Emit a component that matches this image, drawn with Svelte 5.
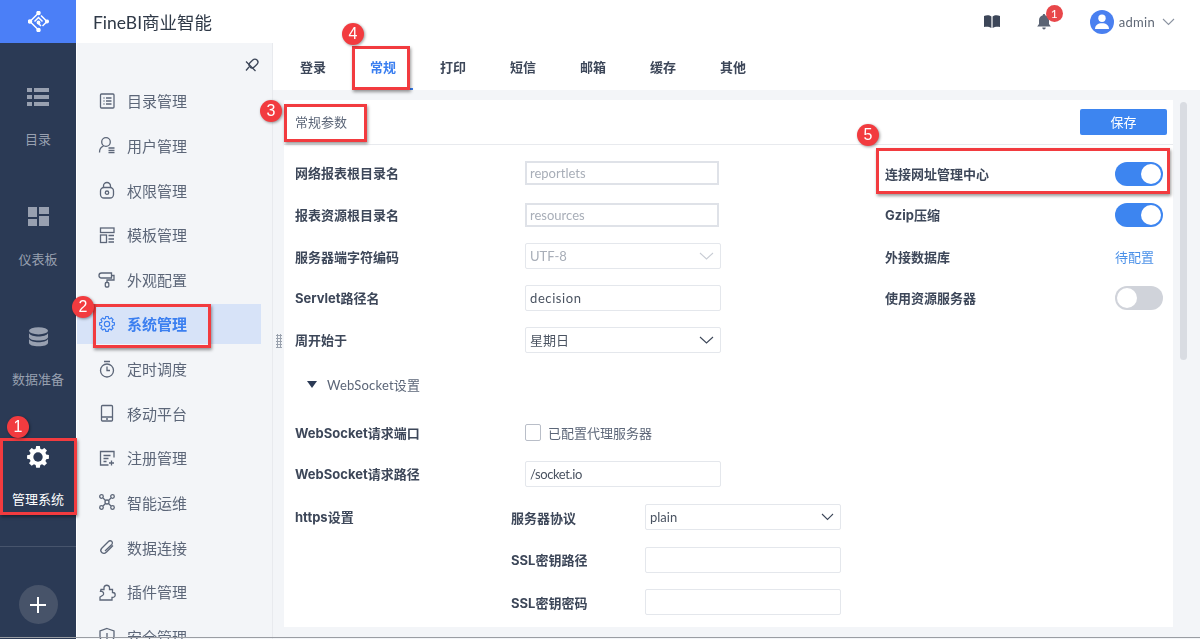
<script>
  const navItems = [
    { label: '目录管理', icon: 'list' },
    { label: '用户管理', icon: 'user' },
    { label: '权限管理', icon: 'lock' },
    { label: '模板管理', icon: 'tpl' },
    { label: '外观配置', icon: 'paint' },
    { label: '系统管理', icon: 'gear', active: true },
    { label: '定时调度', icon: 'timer' },
    { label: '移动平台', icon: 'mobile' },
    { label: '注册管理', icon: 'reg' },
    { label: '智能运维', icon: 'ops' },
    { label: '数据连接', icon: 'clip' },
    { label: '插件管理', icon: 'puzzle' },
    { label: '安全管理', icon: 'shield' }
  ];
  const tabs = ['登录', '常规', '打印', '短信', '邮箱', '缓存', '其他'];
  const gearPath = 'M8.6 1.5h2.8l.4 2.1 1.3.6 1.8-1.2 2 2-1.2 1.8.6 1.3 2.1.4v2.8l-2.1.4-.6 1.3 1.2 1.8-2 2-1.8-1.2-1.3.6-.4 2.1H8.6l-.4-2.1-1.3-.6-1.8 1.2-2-2 1.2-1.8-.6-1.3-2.1-.4V8.6l2.1-.4.6-1.3-1.2-1.8 2-2 1.8 1.2 1.3-.6z';
</script>

<div class="app">
  <aside class="rail">
    <div class="logo">
      <svg width="21" height="21" viewBox="0 0 21 21" fill="none" stroke="#fff" stroke-width="1.500">
        <path d="M10.500 2 2 10.500l8.500 8.500M13 4.500l6 6-4.500 4.500M6.500 10.500l4-4 4 4M10.500 12.500l2.500 2.500" />
        <circle cx="10.500" cy="2" r="1.500" fill="#fff" /><circle cx="2" cy="10.500" r="1.500" fill="#fff" /><circle cx="10.500" cy="19" r="1.500" fill="#fff" /><circle cx="19" cy="10.500" r="1.300" fill="#fff" /><circle cx="10.500" cy="11.500" r="1.200" fill="#fff" />
      </svg>
    </div>
    <div class="rail-item first">
      <svg width="22" height="18" viewBox="0 0 22 18" fill="#98a0b0"><rect width="5" height="4" y="0"/><rect x="7" width="15" height="4"/><rect y="7" width="5" height="4"/><rect x="7" y="7" width="15" height="4"/><rect y="14" width="5" height="4"/><rect x="7" y="14" width="15" height="4"/></svg>
      <span>目录</span>
    </div>
    <div class="rail-item">
      <svg width="21" height="20" viewBox="0 0 21 20" fill="#98a0b0"><rect width="9" height="10"/><rect x="11" width="10" height="7"/><rect y="12" width="9" height="7"/><rect x="11" y="9" width="10" height="10"/></svg>
      <span>仪表板</span>
    </div>
    <div class="rail-item">
      <svg width="21" height="21" viewBox="0 0 21 21" fill="#98a0b0"><ellipse cx="10.500" cy="4" rx="10" ry="3.800"/><path d="M.5 6.500c1.500 2.600 5.500 3.400 10 3.400s8.500-.8 10-3.400v4c0 2.300-4.500 3.800-10 3.800s-10-1.500-10-3.800z"/><path d="M.5 12.500c1.500 2.600 5.500 3.400 10 3.400s8.500-.8 10-3.400v4c0 2.300-4.500 3.800-10 3.800s-10-1.500-10-3.800z"/></svg>
      <span>数据准备</span>
    </div>
    <div class="rail-item current">
      <svg class="gear" viewBox="0 0 20 20"><path d={gearPath} fill="#fff"/><circle cx="10" cy="10" r="3.600" fill="#2b3a55"/></svg>
      <span>管理系统</span>
    </div>
    <div class="rail-foot">
      <div class="add">
        <svg width="16" height="16" viewBox="0 0 16 16" fill="#fff"><rect x="7" width="2" height="16"/><rect y="7" width="16" height="2"/></svg>
      </div>
    </div>
  </aside>

  <div class="main">
    <header class="top">
      <div class="brand">FineBI商业智能</div>
      <div class="top-right">
        <svg class="book" width="16" height="13" viewBox="0 0 16 13" fill="#3c4658"><path d="M0 1c2.500-1 5.500-1 7.400.5V13C5.500 11.700 2.500 11.500 0 12zM16 1c-2.500-1-5.500-1-7.400.5V13c1.900-1.300 4.900-1.500 7.400-1z"/></svg>
        <div class="bell">
          <svg width="14" height="16" viewBox="0 0 14 16" fill="#5b6474"><path d="M7 0c.8 0 1.200.5 1.200 1.200C10.500 1.800 12 3.800 12 6.300V10l1.800 2.400H.2L2 10V6.300c0-2.500 1.500-4.500 3.800-5.100C5.800.5 6.200 0 7 0zM5.300 13.500h3.400C8.700 14.800 8 15.500 7 15.500s-1.700-.7-1.700-2z"/></svg>
          <span class="bell-count">1</span>
        </div>
        <div class="avatar">
          <svg width="14" height="15" viewBox="0 0 14 15" fill="#fff"><circle cx="7" cy="4.200" r="3.700"/><path d="M0 15c0-4 3-5.800 7-5.800s7 1.800 7 5.800z"/></svg>
        </div>
        <span class="uname">admin</span>
        <svg class="user-caret" width="13" height="8" viewBox="0 0 13 8" fill="none" stroke="#8b93a1" stroke-width="1.100"><path d="m1 1 5.500 5.500L12 1"/></svg>
      </div>
    </header>

    <div class="body">
      <nav class="side">
        <div class="pin">
          <svg width="16" height="16" viewBox="0 0 16 16" fill="none" stroke="#3d4759" stroke-width="1.300">
            <rect x="5.500" y="2.500" width="6" height="10" rx="3" transform="rotate(45 8.500 7.500)"/>
            <path d="M1 5.500 10.500 15M4 11 1 14.500"/>
          </svg>
        </div>
        {#each navItems as item}
          <div class="nav-item" class:active={item.active}>
            <svg width="18" height="18" viewBox="0 0 18 18" fill="none" stroke={item.active ? '#3b7ff0' : '#5c6678'} stroke-width="1.300">
              {#if item.icon === 'list'}
                <rect x="2.500" y="2" width="13.500" height="14" rx="1"/><path d="M5.500 6h1M8 6h5.500M5.500 9h1M8 9h5.500M5.500 12h1M8 12h5.500"/>
              {:else if item.icon === 'user'}
                <circle cx="8" cy="6" r="4.300"/><path d="M1.500 16.500c0-3.500 1.500-5.500 4-6.300M10.500 12h6M10.500 14.300h6M10.500 16.500h6"/>
              {:else if item.icon === 'lock'}
                <rect x="2.500" y="6.500" width="13" height="10.500" rx="3.500"/><path d="M5.500 6.500V5a3.500 3.500 0 0 1 7 0v1.500"/><circle cx="9" cy="11.700" r="1.700"/>
              {:else if item.icon === 'tpl'}
                <rect x="2.500" y="2" width="13.500" height="4.500"/><rect x="2.500" y="9" width="6" height="7.500"/><path d="M10.500 9.500h5.500M10.500 13h5.500M10.500 16h5.500"/>
              {:else if item.icon === 'paint'}
                <path d="M3.500 3h10v5h-10a2.500 2.500 0 0 1 0-5zM13.500 5.500H16v4.500H9v2.500"/><rect x="7.300" y="12.500" width="3.500" height="4.500" rx="1"/>
              {:else if item.icon === 'gear'}
                <g transform="translate(.2 .2) scale(.88)"><path d={gearPath}/><circle cx="10" cy="10" r="3"/></g>
              {:else if item.icon === 'timer'}
                <circle cx="9" cy="10.500" r="6.500"/><path d="M6 1.500h6M9 6.500v4h3"/>
              {:else if item.icon === 'mobile'}
                <rect x="3.500" y="1.500" width="11" height="15.500" rx="1"/><path d="M3.500 13h11M8 15h2"/>
              {:else if item.icon === 'reg'}
                <path d="M16 8.500V2.500H2.500V16H10.500M5.500 6.500h7M5.500 9.500h5M5.500 12.500h3M13.500 11.500v5M11 14h5"/>
              {:else if item.icon === 'ops'}
                <circle cx="3.500" cy="3.500" r="1.800"/><circle cx="14.500" cy="3.500" r="1.800"/><circle cx="3.500" cy="14.500" r="1.800"/><circle cx="14.500" cy="14.500" r="1.800"/><circle cx="9" cy="9" r="2"/><path d="m5 5 2.500 2.500M13 5l-2.500 2.500M5 13l2.500-2.500M13 13l-2.500-2.500"/>
              {:else if item.icon === 'clip'}
                <path d="M15 7.500 8.300 14.200a3 3 0 0 1-4.800-3.700l7-7a2.200 2.200 0 0 1 3.300 3L7 13"/>
              {:else if item.icon === 'puzzle'}
                <path d="M6 4.500a2.800 2.800 0 0 1 5.500 0V6.500H14.500v3h.3a2.400 2.400 0 0 1 0 4.800H14V17H2v-3l2.800-1.700a2.300 2.300 0 0 0-1-4H2.500l.5-1.800H6z"/>
              {:else}
                <path d="M9 1.500 16 4v5c0 4-3 6.500-7 8-4-1.500-7-4-7-8V4zM9 6v6"/>
              {/if}
            </svg>
            <span>{item.label}</span>
          </div>
        {/each}
      </nav>

      <section class="content">
        <div class="grip"></div>
        <div class="tabs">
          {#each tabs as t}
            <div class="tab" class:on={t === '常规'}>{t}</div>
          {/each}
        </div>
        <div class="page">
          <div class="panel">
            <div class="panel-head">
              <span>常规参数</span>
              <button class="save">保存</button>
            </div>
            <div class="columns">
              <div class="col-left">
                <div class="row"><label for="a">网络报表根目录名</label><input id="a" class="ro" value="reportlets" readonly /></div>
                <div class="row"><label for="b">报表资源根目录名</label><input id="b" class="ro" value="resources" readonly /></div>
                <div class="row"><span class="lab">服务器端字符编码</span>
                  <div class="field dis">UTF-8
                    <svg width="15" height="8" viewBox="0 0 15 8" fill="none" stroke="#c8ccd4" stroke-width="1.100"><path d="m1 1 6.500 6L14 1"/></svg>
                  </div>
                </div>
                <div class="row"><span class="lab">Servlet路径名</span><div class="field wide">decision</div></div>
                <div class="row"><span class="lab">周开始于</span>
                  <div class="field">星期日
                    <svg width="15" height="8" viewBox="0 0 15 8" fill="none" stroke="#3d4759" stroke-width="1.100"><path d="m1 1 6.500 6L14 1"/></svg>
                  </div>
                </div>
                <div class="section">
                  <svg width="10" height="7" viewBox="0 0 10 7" fill="#2b3a55"><path d="M0 0h10L5 7z"/></svg>
                  <span>WebSocket设置</span>
                </div>
                <div class="row"><span class="lab">WebSocket请求端口</span>
                  <div class="check"><i></i><span>已配置代理服务器</span></div>
                </div>
                <div class="row"><span class="lab">WebSocket请求路径</span><div class="field tight">/socket.io</div></div>
                <div class="row https">
                  <span class="lab">https设置</span>
                  <div class="sub">
                    <div class="subrow"><span class="lab s">服务器协议</span>
                      <div class="field">plain
                        <svg width="13" height="8" viewBox="0 0 13 8" fill="none" stroke="#3d4759" stroke-width="1.100"><path d="m1 1 5.500 5.500L12 1"/></svg>
                      </div>
                    </div>
                    <div class="subrow"><span class="lab s">SSL密钥路径</span><div class="field"></div></div>
                    <div class="subrow"><span class="lab s">SSL密钥密码</span><div class="field"></div></div>
                  </div>
                </div>
              </div>
              <div class="col-right">
                <div class="rrow"><span class="lab">连接网址管理中心</span><div class="switch on"><b></b></div></div>
                <div class="rrow"><span class="lab">Gzip压缩</span><div class="switch on"><b></b></div></div>
                <div class="rrow"><span class="lab">外接数据库</span><a href="#top" class="link">待配置</a></div>
                <div class="rrow"><span class="lab">使用资源服务器</span><div class="switch"><b></b></div></div>
              </div>
            </div>
          </div>
          <div class="scroll"><div class="thumb"></div></div>
        </div>
      </section>
    </div>
  </div>

  <div class="box b1"></div>
  <div class="box b2"></div>
  <div class="box b3"></div>
  <div class="box b4"></div>
  <div class="box b5"></div>
  <div class="dot d1">1</div>
  <div class="dot d2">2</div>
  <div class="dot d3">3</div>
  <div class="dot d4">4</div>
  <div class="dot d5">5</div>
  <div class="baseline"></div>
</div>

<style>
  :global(body) { margin: 0; background: #fff; }
  .app {
    position: relative;
    width: 1200px;
    height: 639px;
    display: flex;
    overflow: hidden;
    font-family: "Lato", "Noto Sans CJK SC", sans-serif;
    color: #3d4759;
    filter: blur(0.35px);
  }
  .rail {
    width: 76px;
    flex: none;
    background: #2b3a55;
    display: flex;
    flex-direction: column;
    align-items: stretch;
    margin-right: 1px;
  }
  .logo {
    height: 43px;
    background: #4b7ff7;
    display: flex;
    align-items: center;
    justify-content: center;
  }
  .rail-item {
    height: 120px;
    display: flex;
    flex-direction: column;
    align-items: center;
    gap: 23px;
    color: #98a0b0;
    font-size: 13px;
    line-height: 18px;
  }
  .rail-item.first { margin-top: 44px; }
  .rail-item svg { height: 20px; }
  .rail-item.current {
    height: 70px;
    color: #fff;
    gap: 20px;
    margin-top: -6px;
    padding-top: 3px;
  }
  .rail-item svg.gear { width: 26px; height: 26px; }
  .rail-foot {
    margin-top: 32px;
    border-top: 1px solid #47546c;
    padding-top: 38px;
    height: 90px;
    box-sizing: border-box;
    display: flex;
    justify-content: center;
  }
  .add {
    width: 39px;
    height: 39px;
    border-radius: 50%;
    background: #475369;
    display: flex;
    align-items: center;
    justify-content: center;
  }
  .main { flex: 1; display: flex; flex-direction: column; min-width: 0; }
  .top {
    height: 43px;
    flex: none;
    display: flex;
    align-items: center;
    justify-content: space-between;
    padding: 0 25px 0 16px;
    box-sizing: border-box;
  }
  .brand { font-size: 17.5px; color: #2f3947; }
  .top-right { display: flex; align-items: center; }
  .bell { position: relative; margin-left: 37px; height: 16px; }
  .bell-count {
    position: absolute;
    top: -9px;
    left: 9px;
    width: 17px;
    height: 17px;
    border-radius: 50%;
    background: #e8474a;
    color: #fff;
    font-size: 12px;
    line-height: 17px;
    text-align: center;
  }
  .avatar {
    width: 24px;
    height: 24px;
    margin-left: 39px;
    border-radius: 50%;
    background: #4a80f0;
    display: flex;
    align-items: center;
    justify-content: center;
  }
  .uname { margin-left: 5px; font-size: 13px; color: #5f6876; letter-spacing: .3px; }
  .user-caret { margin-left: 7px; }
  .body { flex: 1; display: flex; min-height: 0; }
  .side {
    width: 195px;
    flex: none;
    background: #f3f5f8;
    padding-right: 11px;
    box-sizing: border-box;
    overflow: hidden;
  }
  .pin { height: 38px; display: flex; justify-content: flex-end; padding: 13px 0 0 0; box-sizing: border-box; }
  .nav-item {
    height: 39.700px;
    margin-bottom: 4.950px;
    display: flex;
    align-items: center;
    gap: 11px;
    padding-left: 21px;
    font-size: 15px;
    color: #5c6678;
  }
  .nav-item.active { background: #d7e3f8; color: #3b7ff0; font-weight: 700; }
  .content { flex: 1; display: flex; flex-direction: column; min-width: 0; position: relative; border-left: 1px solid #e8eaee; }
  .grip {
    position: absolute;
    left: 3px;
    top: 291px;
    width: 6px;
    height: 14px;
    background-image: radial-gradient(circle, #9aa2ae 1px, transparent 1.100px);
    background-size: 3px 3px;
  }
  .tabs {
    height: 47px;
    flex: none;
    display: flex;
    gap: 10px;
    padding-left: 10px;
    box-sizing: border-box;
  }
  .tab {
    width: 60px;
    text-align: center;
    font-size: 13px;
    font-weight: 700;
    line-height: 49px;
    color: #3d4759;
    box-sizing: border-box;
  }
  .tab.on { color: #3b7ff0; border-bottom: 2px solid #3b7ff0; }
  .page {
    flex: 1;
    min-height: 0;
    background: #f3f5f8;
    padding: 10px 12px 12px 11px;
    display: flex;
    gap: 7px;
  }
  .panel { width: 889px; background: #fff; overflow: hidden; }
  .panel-head {
    height: 45px;
    border-bottom: 1px solid #e8eaee;
    display: flex;
    align-items: center;
    justify-content: space-between;
    padding: 0 6px 0 11px;
    box-sizing: border-box;
    font-size: 13px;
    color: #5c6678;
  }
  .panel-head > span { margin-top: -2px; }
  .save {
    width: 87px;
    height: 26px;
    border: 0;
    border-radius: 2px;
    background: #3d85f0;
    color: #fff;
    font: inherit;
    font-size: 13px;
    margin-top: -1px;
  }
  .columns { display: flex; padding: 7px 10px 0 11px; }
  .col-left { width: 590px; flex: none; }
  .col-right { flex: 1; padding-top: 1px; }
  .row { display: flex; align-items: center; height: 41.700px; }
  label, .lab { font-family: "Inter", "Noto Sans CJK SC", sans-serif; font-size: 13px; font-weight: 700; color: #3d4759; }
  .row > label, .row > .lab { width: 230px; flex: none; }
  input.ro {
    width: 194px;
    height: 24px;
    box-sizing: border-box;
    border: 2px solid #dfe2e8;
    padding: 0 3px;
    font: inherit;
    font-size: 13px;
    color: #a8aeb8;
    outline: 0;
  }
  .field {
    width: 196px;
    height: 26px;
    box-sizing: border-box;
    border: 1px solid #e4e7ec;
    border-radius: 2px;
    padding: 0 4px;
    display: flex;
    align-items: center;
    justify-content: space-between;
    font-size: 13px;
    color: #4a5361;
  }
  .field.wide { letter-spacing: .6px; }
  .field.tight { letter-spacing: -.4px; }
  .field svg { margin-right: 2px; }
  .field.dis { color: #a8aeb8; }
  .section {
    height: 48px;
    display: flex;
    align-items: center;
    gap: 10px;
    padding-left: 12px;
    font-size: 13px;
    letter-spacing: .2px;
    color: #5c6678;
    margin-bottom: 3px;
  }
  .check { display: flex; align-items: center; gap: 7px; font-size: 13px; color: #5c6678; }
  .check i { width: 16px; height: 17px; box-sizing: border-box; border: 1px solid #b9bec8; border-radius: 2px; display: block; }
  .https { height: auto; align-items: flex-start; padding-top: 1px; }
  .https > .lab { line-height: 42px; }
  .sub { display: flex; flex-direction: column; margin-left: -14px; }
  .subrow { display: flex; align-items: center; height: 42.500px; }
  .subrow .lab { width: 134px; flex: none; }
  .rrow { display: flex; align-items: center; justify-content: space-between; height: 41.300px; }
  .switch {
    width: 48px;
    height: 24px;
    border-radius: 12px;
    background: #d0d3da;
    box-sizing: border-box;
    padding: 2px;
    display: flex;
  }
  .switch b { width: 20px; height: 20px; border-radius: 50%; background: #fff; display: block; }
  .switch.on { background: #3d85f0; justify-content: flex-end; }
  .link { color: #4a90e8; font-size: 13px; text-decoration: none; width: 48px; }
  .scroll { width: 8px; flex: none; }
  .thumb { width: 7px; height: 258px; border-radius: 4px; background: #d9dce2; margin-top: 2px; }

  .box { position: absolute; border: 3px solid #f23b3f; box-sizing: border-box; box-shadow: 1px 2px 3px rgba(0,0,0,.4); }
  .b1 { left: 0; top: 438px; width: 77px; height: 77px; }
  .b2 { left: 93px; top: 304px; width: 118px; height: 44px; }
  .b3 { left: 284px; top: 104px; width: 83px; height: 38px; }
  .b4 { left: 352px; top: 46px; width: 58px; height: 44px; }
  .b5 { left: 876px; top: 148px; width: 294px; height: 46px; }
  .dot {
    position: absolute;
    width: 22px;
    height: 22px;
    border-radius: 50%;
    background: #f23b3f;
    color: #fff;
    font-family: "Liberation Sans", sans-serif;
    font-size: 16px;
    line-height: 22px;
    text-align: center;
    box-shadow: 1px 1px 3px rgba(0,0,0,.4);
  }
  .d1 { left: 7px; top: 416px; }
  .d2 { left: 72px; top: 296px; }
  .d3 { left: 260px; top: 100px; }
  .d4 { left: 342px; top: 23px; }
  .d5 { left: 857px; top: 124px; }
  .baseline { position: absolute; left: 0; right: 0; bottom: 1px; height: 1px; background: #9a9da3; }
</style>
